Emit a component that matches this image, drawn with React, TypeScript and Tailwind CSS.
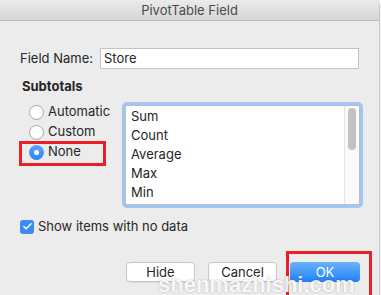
import { Check } from 'lucide-react'

const ITEMS = ['Sum', 'Count', 'Average', 'Max', 'Min']

const RADIOS = [
  { label: 'Automatic', on: false },
  { label: 'Custom', on: false },
  { label: 'None', on: true },
]

function Radio({ on }: { on: boolean }) {
  if (on) {
    return (
      <span className="w-[15px] h-[15px] rounded-full bg-gradient-to-b from-[#5aa5f8] to-[#2a84f4] flex items-center justify-center">
        <span className="w-[5px] h-[5px] rounded-full bg-white" />
      </span>
    )
  }
  return <span className="w-[15px] h-[15px] rounded-full border border-[#a8a8a8] bg-white shadow-[inset_0_-1px_1px_rgba(0,0,0,0.05)]" />
}

export default function App() {
  return (
    <div className="w-[381px] h-[295px] overflow-hidden bg-[#f3f3f3] font-['Inter','Liberation_Sans',sans-serif] text-[13px] text-[#262626]">
      <div className="relative w-[380px] h-[295px] bg-[#ececec] border-r border-[#c9c9c9] rounded-tr-[6px] flex flex-col">
        {/* Title bar */}
        <div className="h-[21px] shrink-0 rounded-tr-[6px] border-b border-[#bcbcbc] bg-gradient-to-b from-[#ebebeb] to-[#d6d6d6] text-center leading-[20px] text-[#4b4b4b]">
          PivotTable Field
        </div>

        {/* Field name */}
        <div className="mt-[27px] pl-[20px] flex items-center">
          <span className="w-[80px]">Field Name:</span>
          <div className="w-[259px] h-[21px] border border-[#c3c3c3] bg-white pl-[3px] leading-[19px]">Store</div>
        </div>

        <div className="mt-[9px] pl-[22px] font-bold leading-[16px]">Subtotals</div>

        {/* Radios + list */}
        <div className="mt-[8px] flex">
          <div className="w-[122px] pl-[29px] flex flex-col">
            {RADIOS.map((r) => (
              <div key={r.label} className="h-[20px] flex items-center gap-[4px]">
                <Radio on={r.on} />
                <span>{r.label}</span>
              </div>
            ))}
          </div>
          <div className="w-[241px] h-[106px] rounded-[5px] bg-[#9fc6f6] p-[3px]">
            <div className="h-full border border-[#bdbdbd] bg-white flex">
              <div className="flex-1 pl-[5px] pt-[1px]">
                {ITEMS.map((it) => (
                  <div key={it} className="h-[19px] leading-[19px]">{it}</div>
                ))}
              </div>
              <div className="w-[15px] border-l border-[#e4e4e4] bg-[#fafafa] pt-[2px] flex justify-center">
                <div className="w-[8px] h-[42px] rounded-full bg-[#c2c2c2]" />
              </div>
            </div>
          </div>
        </div>

        {/* Checkbox */}
        <div className="mt-[9px] pl-[20px] flex items-center gap-[4px]">
          <span className="w-[14px] h-[14px] rounded-[3px] bg-[#3a8cf5] flex items-center justify-center">
            <Check size={11} strokeWidth={3} color="white" />
          </span>
          <span>Show items with no data</span>
        </div>

        {/* Buttons */}
        <div className="mt-[25px] pl-[126px] flex gap-[13px]">
          <button className="w-[69px] h-[20px] rounded-[4px] border border-[#c6c6c6] bg-white shadow-[0_1px_0_rgba(0,0,0,0.06)] leading-[18px]">Hide</button>
          <button className="w-[69px] h-[20px] rounded-[4px] border border-[#c6c6c6] bg-white shadow-[0_1px_0_rgba(0,0,0,0.06)] leading-[18px]">Cancel</button>
          <button className="w-[70px] h-[20px] rounded-[4px] bg-gradient-to-b from-[#69b1fa] to-[#1b80f9] text-white leading-[20px]">OK</button>
        </div>

        {/* Annotation boxes */}
        <div className="absolute left-[19px] top-[141px] w-[87px] h-[25px] border-[3px] border-[#e8202a]" />
        <div className="absolute left-[286px] top-[251px] w-[86px] h-[50px] border-[3px] border-[#e8202a]" />

        {/* Watermark */}
        <div className="absolute left-[158px] top-[273px] font-['Liberation_Sans',sans-serif] font-bold text-[22px] leading-[24px] text-white/90 [text-shadow:0_0_2px_rgba(0,0,0,0.3)]">
          shenmazhishi.com
        </div>
      </div>
    </div>
  )
}
